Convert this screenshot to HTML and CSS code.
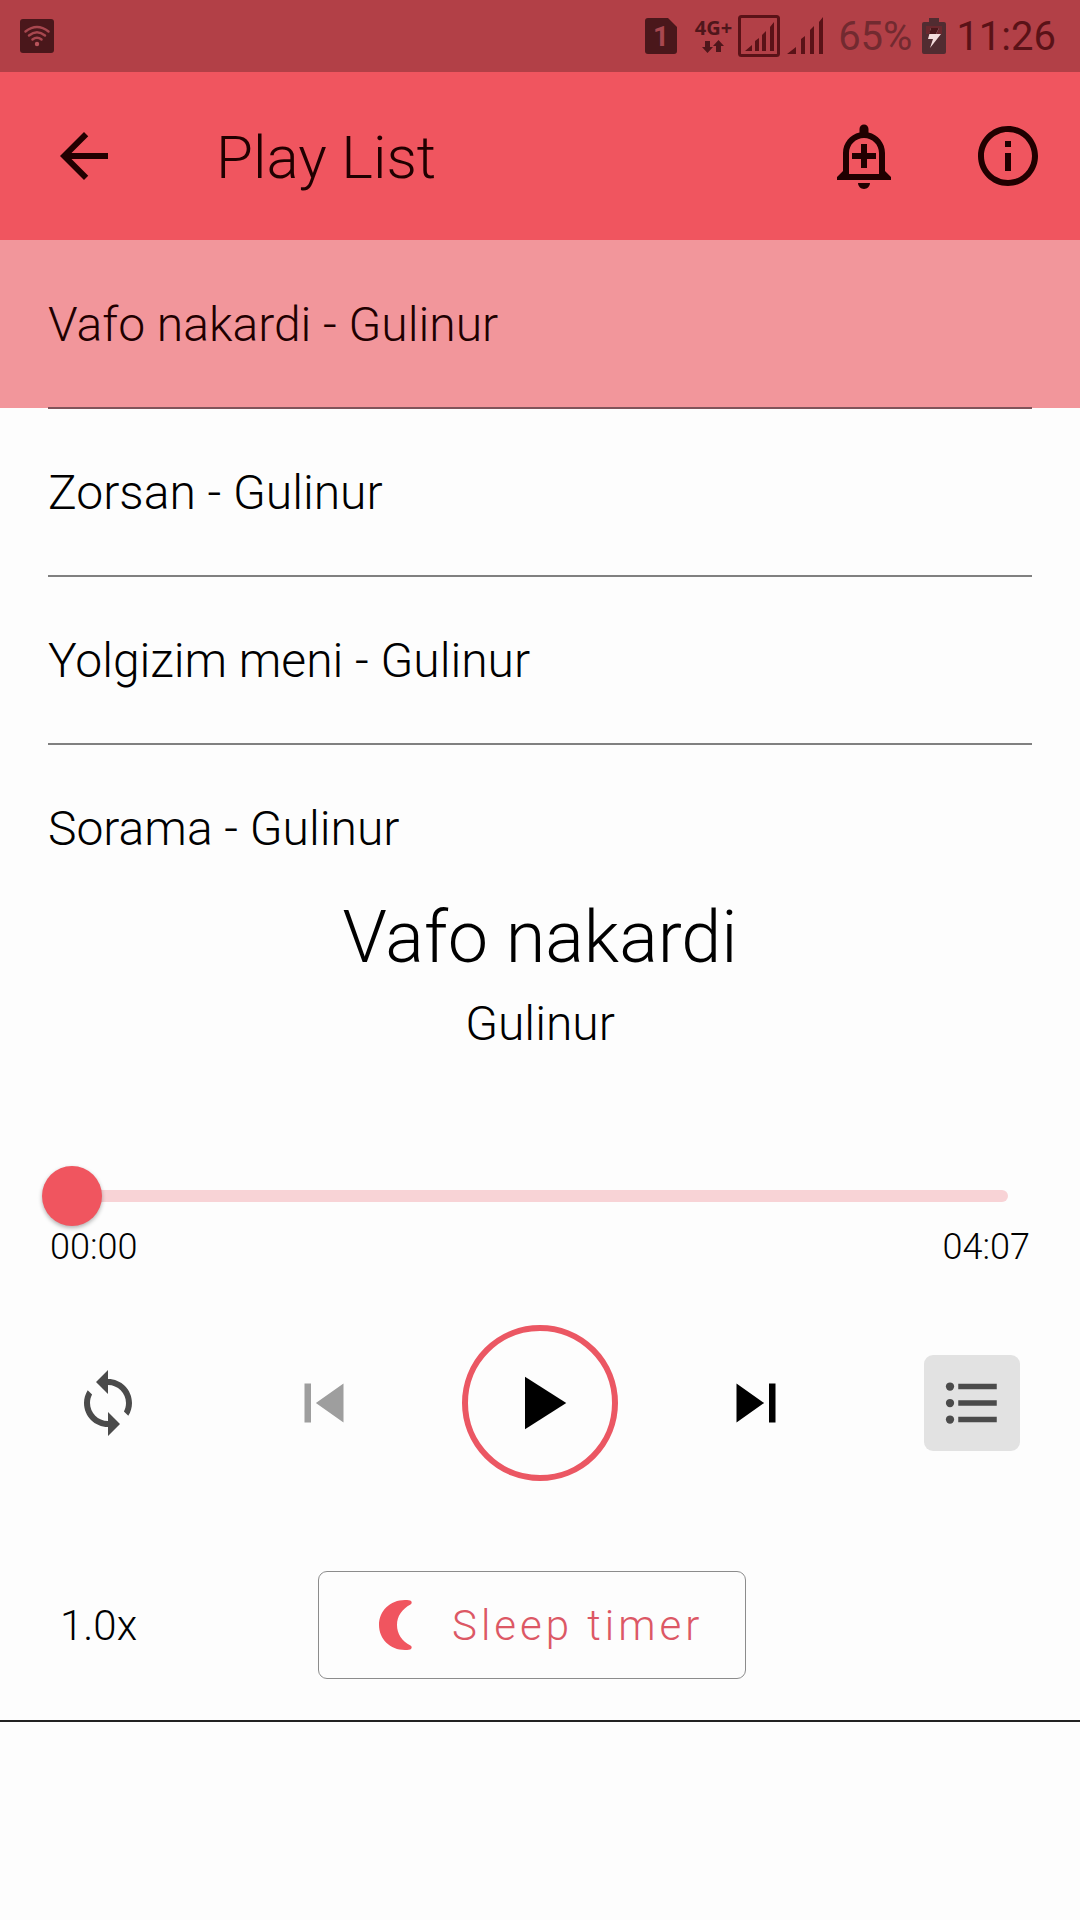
FILE: index.html
```html
<!DOCTYPE html>
<html lang="en">
<head>
<meta charset="utf-8">
<meta name="viewport" content="width=device-width, initial-scale=1">
<title>Play List</title>
<link rel="stylesheet" href="styles.css">
</head>
<body>
<div class="status">
  <svg class="status-wifi" width="34" height="34" viewBox="0 0 34 34" aria-hidden="true">
    <rect width="34" height="34" rx="3" fill="#4a171b"/>
    <g fill="none" stroke="#a8474f" stroke-width="2.500" stroke-linecap="round">
      <path d="M5.500 12.500Q17 3.500 28.500 12.500"/><path d="M9 16.500Q17 10 25 16.500"/><path d="M12.500 20.500Q17 17 21.500 20.500"/>
    </g>
    <circle cx="17" cy="25" r="2.200" fill="#b9545c"/>
  </svg>
  <svg class="status-sim" width="32" height="36" viewBox="0 0 32 36" aria-hidden="true">
    <path d="M3 0h20l9 9v24a3 3 0 0 1-3 3H3a3 3 0 0 1-3-3V3a3 3 0 0 1 3-3z" fill="#4a171b"/>
    <text class="sim-number" x="16" y="28" text-anchor="middle">1</text>
  </svg>
  <div class="network">
    <span>4G+</span>
    <svg width="22" height="14" viewBox="0 0 22 14" aria-hidden="true">
      <path d="M3 1h5v6h3l-5.500 6L0 7h3zM14 12h5V6h3l-5.500-6L11 6h3z" fill="#4f161b"/>
    </svg>
  </div>
  <svg class="status-signal" width="42" height="42" viewBox="0 0 42 42" aria-hidden="true">
    <rect x="1.500" y="1.500" width="39" height="39" rx="2" fill="none" stroke="#5a1217" stroke-width="3"/>
    <path d="M7 36l7-6v6zM17 26l4-3v13h-4zM24 20l4-4v20h-4zM32 12l4-5v29h-4z" fill="#5a1217"/>
  </svg>
  <svg class="status-signal" width="38" height="38" viewBox="0 0 38 38" aria-hidden="true">
    <path d="M1 37l9-7v7zM15 22l4-3v18h-4zM24 13l4-4v28h-4zM33 5l4-5v37h-4z" fill="#5a1217"/>
  </svg>
  <span class="battery-level">65%</span>
  <svg class="status-battery" width="24" height="36" viewBox="0 0 24 36" aria-hidden="true">
    <path d="M7 0h10v4h5a2 2 0 0 1 2 2v28a2 2 0 0 1-2 2H2a2 2 0 0 1-2-2V6a2 2 0 0 1 2-2h5z" fill="#512c31"/>
    <path d="M4 8h16v8H4z" fill="#6b282e"/>
    <path d="M9 10h8l-3 6h5L8 30l3-9H6z" fill="#f3dcdc"/>
    <path d="M9 10h8l-3 6H7z" fill="#4a171b"/>
  </svg>
  <span class="clock">11:26</span>
</div>

<header class="appbar">
  <button class="icon-button back" aria-label="Back">
    <svg width="72" height="72" viewBox="0 0 24 24"><path d="M20 11H7.830l5.590-5.590L12 4l-8 8 8 8 1.410-1.410L7.830 13H20v-2z"/></svg>
  </button>
  <h1 class="appbar-title">Play List</h1>
  <button class="icon-button" aria-label="Add alert">
    <svg width="72" height="72" viewBox="0 0 24 24"><path d="M10.010 21.010c0 1.100.890 1.990 1.990 1.990s1.990-.890 1.990-1.990h-3.980zM12 6c2.760 0 5 2.240 5 5v7H7v-7c0-2.760 2.240-5 5-5zm0-4.500c-.830 0-1.500.670-1.500 1.500v1.170C7.360 4.850 5 7.650 5 11v6l-2 2v1h18v-1l-2-2v-6c0-3.350-2.360-6.150-5.500-6.830V3c0-.830-.670-1.500-1.500-1.500zM11 8v3H8v2h3v3h2v-3h3v-2h-3V8h-2z"/></svg>
  </button>
  <button class="icon-button" aria-label="Info">
    <svg width="72" height="72" viewBox="0 0 24 24"><path d="M11 7h2v2h-2zm0 4h2v6h-2zm1-9C6.480 2 2 6.480 2 12s4.480 10 10 10 10-4.480 10-10S17.520 2 12 2zm0 18c-4.410 0-8-3.590-8-8s3.590-8 8-8 8 3.590 8 8-3.590 8-8 8z"/></svg>
  </button>
</header>

<ul class="tracks">
  <li class="track current"><button class="track-button">Vafo nakardi - Gulinur</button></li>
  <li class="track"><button class="track-button">Zorsan - Gulinur</button></li>
  <li class="track"><button class="track-button">Yolgizim meni - Gulinur</button></li>
  <li class="track"><button class="track-button">Sorama - Gulinur</button></li>
</ul>

<main class="player">
  <h2 class="song">Vafo nakardi</h2>
  <p class="artist">Gulinur</p>
  <input class="seek" type="range" min="0" max="247" value="0" aria-label="Position">
  <div class="times"><span>00:00</span><span>04:07</span></div>
  <div class="controls">
    <button class="control" aria-label="Repeat">
      <svg width="72" height="72" viewBox="0 0 24 24"><path d="M12 4V1L8 5l4 4V6c3.310 0 6 2.690 6 6 0 1.010-.250 1.970-.700 2.800l1.460 1.460C19.540 15.030 20 13.570 20 12c0-4.420-3.580-8-8-8zm0 14c-3.310 0-6-2.690-6-6 0-1.010.250-1.970.700-2.800L5.240 7.740C4.460 8.970 4 10.430 4 12c0 4.420 3.580 8 8 8v3l4-4-4-4v3z"/></svg>
    </button>
    <button class="control previous" aria-label="Previous">
      <svg width="78" height="78" viewBox="0 0 24 24"><path d="M6 6h2v12H6zm3.500 6l8.500 6V6z"/></svg>
    </button>
    <button class="control play" aria-label="Play">
      <svg width="90" height="90" viewBox="0 0 24 24"><path d="M8 5v14l11-7z"/></svg>
    </button>
    <button class="control next" aria-label="Next">
      <svg width="78" height="78" viewBox="0 0 24 24"><path d="M6 18l8.500-6L6 6v12zM16 6v12h2V6h-2z"/></svg>
    </button>
    <button class="control list" aria-label="Show list" aria-pressed="true">
      <svg width="66" height="66" viewBox="0 0 24 24"><circle cx="4" cy="6" r="1.500"/><circle cx="4" cy="12" r="1.500"/><circle cx="4" cy="18" r="1.500"/><path d="M7 5h14v2H7zM7 11h14v2H7zM7 17h14v2H7z"/></svg>
    </button>
  </div>
  <div class="options">
    <button class="speed">1.0x</button>
    <button class="sleep">
      <svg width="34" height="50" viewBox="0 0 34 50" aria-hidden="true"><path d="M26 0C11 0 0 11 0 25s11 25 26 25c3 0 5-.300 6-1 1-1 1-2.500-.500-3.400C23 41 18 34 18 25s5-16 13.500-20.600C33 3.500 33 2 32 1 31 .300 29 0 26 0z"/></svg>
      Sleep timer
    </button>
  </div>
</main>
<footer class="footer"></footer>
</body>
</html>
```
FILE: styles.css
```css
* {
  box-sizing: border-box;
}

body {
  margin: 0;
  height: 100vh;
  display: flex;
  flex-direction: column;
  background: #fdfdfd;
  color: #000;
  font-family: Roboto, "Noto Sans", sans-serif;
  font-weight: 300;
}

button {
  margin: 0;
  padding: 0;
  border: 0;
  background: none;
  color: inherit;
  font: inherit;
  cursor: pointer;
}

svg {
  display: block;
  flex: none;
}

/* Status bar */
.status {
  flex: none;
  display: flex;
  align-items: center;
  height: 72px;
  padding: 0 24px 0 20px;
  background: #b24047;
  color: #5a1217;
  font-size: 40px;
  font-weight: 400;
}

.status-sim {
  margin-left: auto;
}

.sim-number {
  fill: #a8474f;
  font-size: 28px;
  font-weight: 700;
}

.network {
  display: flex;
  flex-direction: column;
  align-items: center;
  gap: 2px;
  margin: 0 6px 0 18px;
  color: #4f161b;
  font: 700 20px/20px "Open Sans", sans-serif;
}

.status-signal {
  margin-right: 6px;
}

.battery-level {
  margin-left: 8px;
  color: #722a30;
}

.status-battery {
  margin: 0 10px;
}

/* App bar */
.appbar {
  flex: none;
  display: flex;
  align-items: center;
  height: 168px;
  background: #f0555f;
  color: #200000;
}

.icon-button {
  display: grid;
  place-items: center;
  width: 144px;
  height: 144px;
  fill: currentColor;
}

.back {
  margin-left: 12px;
}

.appbar-title {
  flex: 1;
  margin: 0;
  padding: 2px 0 0 60px;
  font-size: 60px;
  font-weight: 300;
}

/* Track list */
.tracks {
  flex: 1 1 0;
  min-height: 0;
  margin: 0;
  padding: 0;
  overflow: hidden;
  list-style: none;
}

.track {
  height: 168px;
  padding: 0 48px;
}

.current {
  background: #f2969b;
  color: #200000;
}

.track-button {
  width: 100%;
  height: 169px;
  padding-top: 2px;
  border-bottom: 2px solid #808080;
  font-size: 48px;
  text-align: left;
}

.current .track-button {
  border-color: #80545a;
}

/* Player */
.player {
  flex: none;
  padding: 20px 0 41px;
  border-bottom: 2px solid #222;
}

.song,
.artist {
  margin: 0;
  font-weight: 300;
  text-align: center;
}

.song {
  font-size: 72px;
  line-height: 84px;
}

.artist {
  margin-top: 16px;
  font-size: 48px;
  line-height: 56px;
}

.seek {
  display: block;
  appearance: none;
  width: calc(100% - 114px);
  height: 60px;
  margin: 114px 72px 0 42px;
  background: none;
}

.seek::-webkit-slider-runnable-track {
  height: 12px;
  border-radius: 6px;
  background: linear-gradient(to right, transparent 30px, #f8d3d6 30px);
}

.seek::-webkit-slider-thumb {
  appearance: none;
  width: 60px;
  height: 60px;
  margin-top: -24px;
  border-radius: 50%;
  background: #f0555f;
  box-shadow: 0 2px 4px rgba(0, 0, 0, 0.3);
}

.times {
  display: flex;
  justify-content: space-between;
  padding: 1px 50px 0;
  font-size: 36px;
  line-height: 40px;
}

.controls {
  display: grid;
  grid-template-columns: repeat(5, 1fr);
  place-items: center;
  margin-top: 58px;
}

.control {
  display: grid;
  place-items: center;
  width: 96px;
  height: 96px;
  border-radius: 9px;
  fill: #4b4b4b;
}

.previous {
  fill: #9e9e9e;
}

.play {
  width: 156px;
  height: 156px;
  border: 6px solid #eb5763;
  border-radius: 50%;
  fill: #000;
}

.next {
  fill: #000;
}

.list {
  background: #e2e2e2;
}

.options {
  display: flex;
  align-items: center;
  margin-top: 90px;
  padding-left: 60px;
  font-size: 42px;
}

.speed {
  width: 258px;
  text-align: left;
}

.sleep {
  display: flex;
  align-items: center;
  gap: 39px;
  height: 108px;
  padding: 0 42px 0 60px;
  border: 1px solid #8c8c8c;
  border-radius: 9px;
  color: #dc5865;
  fill: #f0555f;
  letter-spacing: 4px;
}

/* Empty strip under the player */
.footer {
  flex: none;
  height: 198px;
}
```
